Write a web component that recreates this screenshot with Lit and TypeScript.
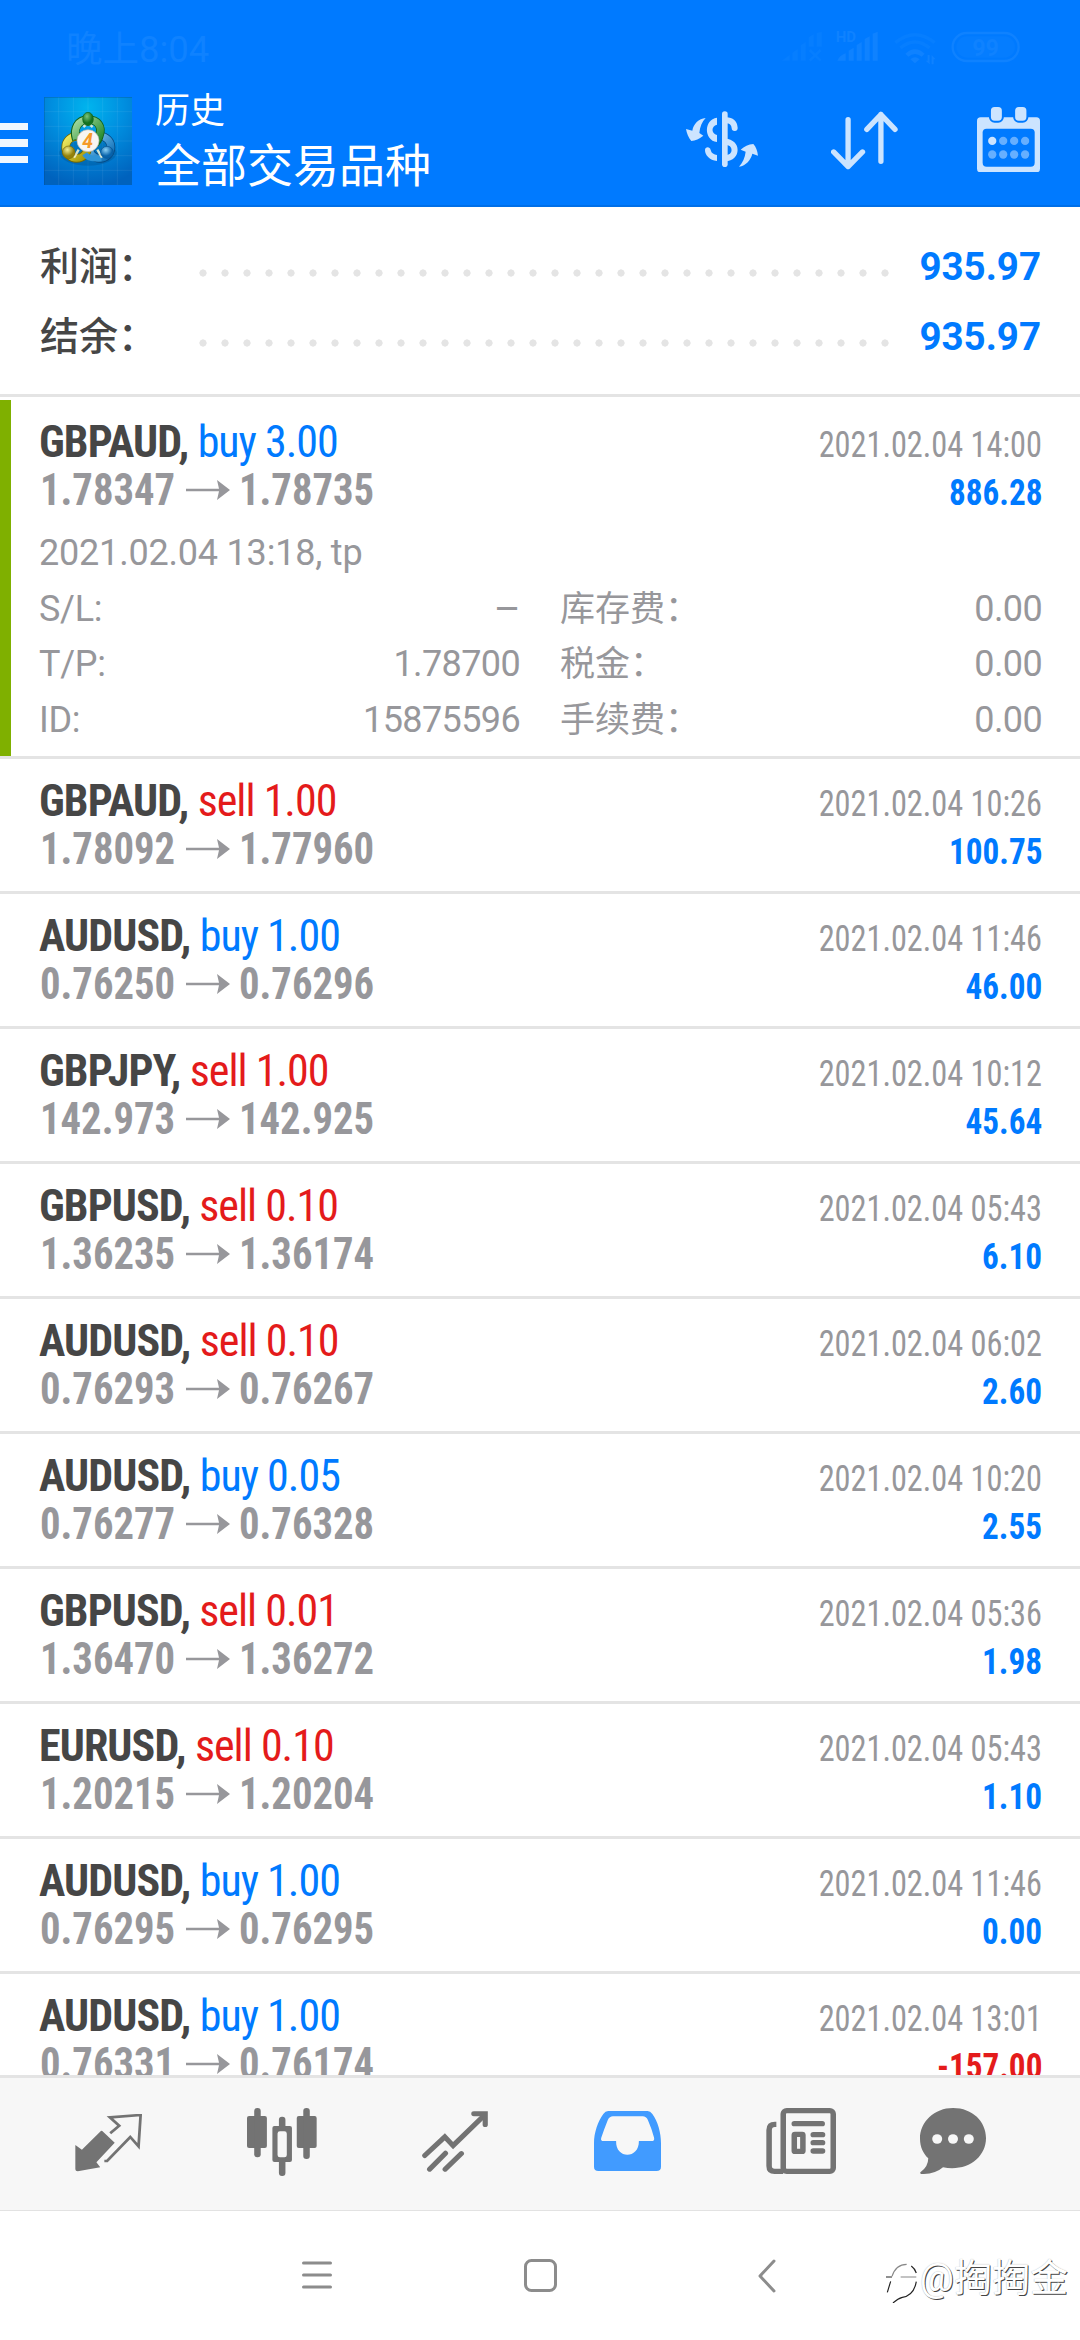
import { LitElement, html, css, svg } from "lit";
import { customElement, property } from "lit/decorators.js";
import { classMap } from "lit/directives/class-map.js";

interface Deal {
  symbol: string;
  side: "buy" | "sell";
  volume: string;
  open: string;
  close: string;
  time: string;
  profit: string;
}

const deals: Deal[] = [
  { symbol: "GBPAUD", side: "buy", volume: "3.00", open: "1.78347", close: "1.78735", time: "2021.02.04 14:00", profit: "886.28" },
  { symbol: "GBPAUD", side: "sell", volume: "1.00", open: "1.78092", close: "1.77960", time: "2021.02.04 10:26", profit: "100.75" },
  { symbol: "AUDUSD", side: "buy", volume: "1.00", open: "0.76250", close: "0.76296", time: "2021.02.04 11:46", profit: "46.00" },
  { symbol: "GBPJPY", side: "sell", volume: "1.00", open: "142.973", close: "142.925", time: "2021.02.04 10:12", profit: "45.64" },
  { symbol: "GBPUSD", side: "sell", volume: "0.10", open: "1.36235", close: "1.36174", time: "2021.02.04 05:43", profit: "6.10" },
  { symbol: "AUDUSD", side: "sell", volume: "0.10", open: "0.76293", close: "0.76267", time: "2021.02.04 06:02", profit: "2.60" },
  { symbol: "AUDUSD", side: "buy", volume: "0.05", open: "0.76277", close: "0.76328", time: "2021.02.04 10:20", profit: "2.55" },
  { symbol: "GBPUSD", side: "sell", volume: "0.01", open: "1.36470", close: "1.36272", time: "2021.02.04 05:36", profit: "1.98" },
  { symbol: "EURUSD", side: "sell", volume: "0.10", open: "1.20215", close: "1.20204", time: "2021.02.04 05:43", profit: "1.10" },
  { symbol: "AUDUSD", side: "buy", volume: "1.00", open: "0.76295", close: "0.76295", time: "2021.02.04 11:46", profit: "0.00" },
  { symbol: "AUDUSD", side: "buy", volume: "1.00", open: "0.76331", close: "0.76174", time: "2021.02.04 13:01", profit: "-157.00" },
];

const details = [
  ["S/L:", "–", "库存费：", "0.00"],
  ["T/P:", "1.78700", "税金：", "0.00"],
  ["ID:", "15875596", "手续费：", "0.00"],
];

@customElement("deal-row")
class DealRow extends LitElement {
  @property({ attribute: false }) deal!: Deal;
  @property({ type: Boolean }) expanded = false;

  static styles = css`
    :host { display: block; flex: none; border-bottom: 3px solid #e4e4e4; font-family: Roboto, "Noto Sans CJK SC", sans-serif; color: #97979b; }
    .row { padding: 18px 38px 18px 39px; }
    .row.expanded { margin-top: 3px; padding: 18px 38px 8px 28px; border-left: 11px solid #7fb000; }
    .line { display: flex; align-items: baseline; justify-content: space-between; height: 48px; line-height: 48px; font-size: 44px; white-space: pre; }
    .condensed { display: inline-block; font-stretch: 75%; }
    .symbol { font-weight: 700; color: #464646; letter-spacing: -0.900px; }
    .side { letter-spacing: -1px; }
    .buy, .plus { color: #007aff; }
    .sell, .minus { color: #e41b1b; }
    .prices { display: flex; align-items: center; font-weight: 700; }
    .price { width: 136px; transform: scaleX(0.924); transform-origin: 0 50%; margin-left: 1px; }
    .arrow { width: 44px; height: 20px; margin: 0 8px 0 10px; }
    .time { font-size: 36px; transform: scaleX(0.897); transform-origin: 100% 50%; }
    .profit { font-size: 36px; font-weight: 700; transform: scaleX(0.922); transform-origin: 100% 50%; }
    .meta { margin-top: 12px; height: 55.500px; line-height: 55.500px; font-size: 36px; letter-spacing: -0.200px; }
    .grid { display: grid; grid-template-columns: 80px 401px 200px 1fr; font-size: 36px; line-height: 55.500px; }
    .name { letter-spacing: -0.300px; }
    .num { text-align: right; letter-spacing: -0.620px; }
    .dash { font-size: 41px; }
    .cjk { font-size: 35px; padding-left: 40px; white-space: nowrap; }
  `;

  render() {
    const d = this.deal;
    const loss = d.profit.startsWith("-");
    return html`
      <div class=${classMap({ row: true, expanded: this.expanded })}>
        <div class="line">
          <span class="condensed"><span class="symbol">${d.symbol}, </span><span class=${`side ${d.side}`}>${d.side} ${d.volume}</span></span>
          <span class="condensed time">${d.time}</span>
        </div>
        <div class="line">
          <span class="prices">
            <span class="condensed price">${d.open}</span>
            <svg class="arrow" viewBox="0 0 44 20"><path d="M0 8.800H33L31 0L44 10L31 20L33 11.200H0Z" fill="#97979b" /></svg>
            <span class="condensed price">${d.close}</span>
          </span>
          <span class=${classMap({ condensed: true, profit: true, minus: loss, plus: !loss })}>${d.profit}</span>
        </div>
        ${this.expanded
          ? html`
              <div class="meta">2021.02.04 13:18, tp</div>
              <div class="grid">
                ${details.map(([a, b, c, e]) => html`<span class="name">${a}</span><span class=${classMap({ num: true, dash: b === "–" })}>${b}</span><span class="cjk">${c}</span><span class="num">${e}</span>`)}
              </div>
            `
          : null}
      </div>
    `;
  }
}

const logo = html`
  <svg class="logo" viewBox="0 0 264 264">
    <defs>
      <radialGradient id="sky" cx="50%" cy="12%" r="90%">
        <stop offset="0" stop-color="#00b4ee" /><stop offset="0.45" stop-color="#008fe0" /><stop offset="1" stop-color="#0062bd" />
      </radialGradient>
      <linearGradient id="green" x1="0" y1="0" x2="1" y2="1"><stop offset="0" stop-color="#a5dba0" /><stop offset="1" stop-color="#1c8425" /></linearGradient>
      <linearGradient id="yellow" x1="0" y1="0" x2="1" y2="1"><stop offset="0" stop-color="#eeec66" /><stop offset="1" stop-color="#a49300" /></linearGradient>
      <linearGradient id="blue" x1="0" y1="0" x2="1" y2="1"><stop offset="0" stop-color="#83c9f2" /><stop offset="1" stop-color="#0569b4" /></linearGradient>
      <radialGradient id="gball" cx="40%" cy="30%"><stop offset="0" stop-color="#7cc47d" /><stop offset="1" stop-color="#137220" /></radialGradient>
      <radialGradient id="yball" cx="40%" cy="30%"><stop offset="0" stop-color="#f2ef94" /><stop offset="1" stop-color="#93810a" /></radialGradient>
      <radialGradient id="bball" cx="40%" cy="30%"><stop offset="0" stop-color="#8bd0f5" /><stop offset="1" stop-color="#0863ab" /></radialGradient>
    </defs>
    <rect width="264" height="264" fill="url(#sky)" />
    <path d="M44 0V264M88 0V264M132 0V264M176 0V264M220 0V264M0 44H264M0 88H264M0 132H264M0 176H264M0 220H264" stroke="#fff" stroke-opacity="0.1" stroke-width="2" />
    <path d="M1 264V1H264" fill="none" stroke="#05427e" stroke-opacity="0.5" stroke-width="2" />
    <ellipse cx="132" cy="168" rx="86" ry="38" fill="#00467f" opacity="0.3" />
    <circle cx="168" cy="151" r="33" fill="none" stroke="#064a83" stroke-width="26" />
    <circle cx="168" cy="151" r="33" fill="none" stroke="url(#blue)" stroke-width="21" />
    <circle cx="98" cy="151" r="33" fill="none" stroke="#756800" stroke-width="26" />
    <circle cx="98" cy="151" r="33" fill="none" stroke="url(#yellow)" stroke-width="21" />
    <path d="M97 128C86 96 102 68 132 68C162 68 176 90 166 116C164 126 158 134 152 140" fill="none" stroke="#12631b" stroke-width="26" />
    <path d="M97 126C88 96 102 68 132 68C162 68 176 90 166 116C164 126 158 132 153 138" fill="none" stroke="url(#green)" stroke-width="21" />
    <path d="M122 170C132 186 150 186 172 184" fill="none" stroke="#2f94d6" stroke-width="17" />
    <path d="M104 158L90 182M160 158L174 182M118 90L132 78L146 90" stroke="#f4f6d5" stroke-width="7" opacity="0.85" fill="none" />
    <ellipse cx="132" cy="66" rx="16" ry="20" fill="url(#gball)" stroke="#126319" stroke-width="2" />
    <ellipse cx="74" cy="166" rx="19" ry="19" fill="url(#yball)" stroke="#786b06" stroke-width="2" />
    <ellipse cx="189" cy="166" rx="19" ry="18" fill="url(#bball)" stroke="#07518f" stroke-width="2" />
    <circle cx="132" cy="131" r="33" fill="#f7f5f3" stroke="#b7b4ab" stroke-width="2" />
    <text x="131" y="152" text-anchor="middle" font-family="Roboto, sans-serif" font-size="58" font-weight="700" font-style="italic" fill="#f59a28">4</text>
  </svg>
`;

const currencyIcon = html`
  <svg class="currency" viewBox="138 333 216 168" fill="#cce4ff">
    <path d="M254.500 342V493" stroke="#cce4ff" stroke-width="17" stroke-linecap="round" />
    <path d="M256 361C275 360 283 370 284 384M256 425C293 427 293 473 256 475" fill="none" stroke="#cce4ff" stroke-width="18" stroke-linecap="round" />
    <path d="M231 353C191 358 191 421 231 426V405C213 400 213 379 231 374Z" />
    <path d="M195 450C195 440 210 439 212 450C214 460 222 464 231 465V483C208 481 195 465 195 450Z" />
    <path d="M197 354C176 356 160 372 157 392L138 387C140 400 146 414 154 423Q172 421 190 407L178 399C180 380 186 365 197 354Z" />
    <path d="M297 500C318 498 333 478 337 461L354 467C352 452 348 440 340 432Q318 434 302 449L317 455C315 472 308 488 297 500Z" />
  </svg>
`;

const sortIcon = html`
  <svg class="sort" viewBox="574 333 202 177" fill="none" stroke="#cce4ff" stroke-width="16" stroke-linecap="round" stroke-linejoin="round">
    <path d="M625.500 359V500M582 456L625.500 500L669 456M724.500 484V343M682 388L724.500 343L767 388" />
  </svg>
`;

const calendarIcon = html`
  <svg class="calendar" viewBox="1010 320 190 197">
    <rect x="1010" y="351" width="190" height="166" rx="11" fill="#cce4ff" />
    <rect x="1027" y="385" width="157" height="115" rx="12" fill="#007aff" />
    <rect x="1049" y="317" width="39" height="47" rx="14" fill="#cce4ff" stroke="#007aff" stroke-width="6" />
    <rect x="1122" y="317" width="40" height="47" rx="14" fill="#cce4ff" stroke="#007aff" stroke-width="6" />
    ${[0, 1, 2, 3].flatMap((c) => [0, 1].map((r) => svg`<circle cx=${1056 + c * 33} cy=${422 + r * 41} r="12.500" fill=${c + r === 0 ? "#cce4ff" : "#66afff"} />`))}
  </svg>
`;

const statusIcons = html`
  <svg class="status-icons" viewBox="424 90 720 104" fill="#0f82ff">
    <g fill="#067eff">
      <path d="M426 182L450 165V182ZM458 158L474 147V182H458ZM483 136L498 126V182H483ZM507 112L522 103V140H507ZM531 99L546 95V140H531Z" />
      <path d="M510 150L543 182M543 150L510 182" stroke="#067eff" stroke-width="8" />
    </g>
    <path d="M593 182Q600 166 618 160V182ZM627 152L642 143V182H627ZM651 135L666 126V182H651ZM675 117L690 109V182H675ZM699 101L714 95V182H699Z" />
    <text x="588" y="126" font-family="Roboto, sans-serif" font-weight="700" font-size="45">HD</text>
    <path d="M767 128Q826 80 885 128M782 144Q826 108 870 144" fill="none" stroke="#067eff" stroke-width="10" />
    <path d="M797 161Q826 134 855 161L846 170Q826 154 806 170ZM812 178Q826 166 840 178L826 190Z" />
    <path d="M858 182H864V165H870V193ZM888 178H882V193H876V165Z" />
    <rect x="939" y="99" width="198" height="84" rx="42" fill="none" stroke="#0f82ff" stroke-width="7" />
    <rect x="950" y="109" width="176" height="64" rx="32" fill="#057dff" />
    <text x="1038" y="167" text-anchor="middle" font-family="Roboto, sans-serif" font-weight="700" font-size="70">99</text>
  </svg>
`;

const g = "#737373";
const tabs = [
  html`<svg class="t1" viewBox="218 461 194 174" preserveAspectRatio="none">
    <path d="M297 512L333 547L280 606L291 621L226 633Q219 633 219 627V554L238 568L293 512Q295 510 297 512Z" fill=${g} />
    <path d="M320 519L346 496L319 471L408 464L402 558L378 530L311 602H303" fill="none" stroke=${g} stroke-width="8" stroke-linejoin="miter" />
  </svg>`,
  html`<svg class="t2" viewBox="714 444 204 204" preserveAspectRatio="none" fill=${g}>
    <rect x="714" y="468" width="58" height="96" rx="6" /><rect x="735" y="444" width="19" height="148" rx="9" />
    <rect x="859" y="468" width="58" height="96" rx="6" /><rect x="878" y="444" width="19" height="153" rx="9" />
    <rect x="788" y="498" width="57" height="108" rx="6" /><rect x="807" y="470" width="19" height="178" rx="9" />
    <rect x="803" y="514" width="27" height="78" rx="7" fill="#f7f7f7" />
  </svg>`,
  html`<svg class="t3" viewBox="1223 452 191 182" preserveAspectRatio="none" fill="none" stroke=${g} stroke-width="15" stroke-linecap="round">
    <path d="M1231 586L1289 530L1313 556L1402 466M1245 627L1291 579M1290 627L1337 580" /><path d="M1373 460H1406V493" stroke-linejoin="miter" />
  </svg>`,
  html`<svg class="t4" viewBox="157 453 194 180" preserveAspectRatio="none">
    <path d="M198 453H312Q320 453 326 462C342 485 351 518 351 550V620Q351 633 338 633H170Q157 633 157 620V550C157 518 168 485 184 462Q190 453 198 453Z" fill="#419bff" />
    <path d="M212 469H298Q308 469 313 480Q324 506 331 533Q333 543 324 543H287C288 598 219 598 221 543H185Q175 543 178 533Q187 506 197 480Q202 469 212 469Z" fill="#f7f7f7" />
  </svg>`,
  html`<svg class="t5" viewBox="656 444 203 198" preserveAspectRatio="none" fill="none" stroke=${g} stroke-width="16">
    <rect x="706" y="452" width="145" height="182" rx="10" /><path d="M686 493H682Q665 493 665 510V618Q665 634 681 634H706" />
    <path d="M738 491H819M793 524H820M793 548H820M793 573H820" stroke-linecap="round" /><rect x="738" y="523" width="25" height="51" rx="2" />
  </svg>`,
  html`<svg class="t6" viewBox="1103 444 192 198" preserveAspectRatio="none">
    <path d="M1199 444C1256 444 1295 485 1295 534C1295 593 1240 636 1170 622Q1147 643 1107 642Q1101 641 1105 636Q1127 620 1127 595C1112 580 1103 560 1103 536C1103 485 1145 444 1199 444Z" fill=${g} />
    <circle cx="1153" cy="537" r="14.500" fill="#f7f7f7" /><circle cx="1199" cy="537" r="14.500" fill="#f7f7f7" /><circle cx="1245" cy="537" r="14.500" fill="#f7f7f7" />
  </svg>`,
];

@customElement("app-root")
class AppRoot extends LitElement {
  static styles = css`
    :host { display: flex; flex-direction: column; width: 1080px; height: 2340px; overflow: hidden; background: #fff; font-family: Roboto, "Noto Sans CJK SC", sans-serif; }
    svg { display: block; flex: none; }
    .head { flex: none; box-sizing: border-box; height: 207px; background: #007aff; border-bottom: 2px solid #006fe8; }
    .status { display: flex; justify-content: space-between; height: 91px; box-sizing: border-box; padding: 26px 59px 0 66px; color: #0f82ff; font-size: 36.500px; line-height: 48px; }
    .status-icons { width: 240px; height: 34.670px; margin-top: 4px; overflow: visible; }
    .bar { display: flex; align-items: flex-start; height: 114px; color: #fff; }
    .menu { display: flex; flex-direction: column; gap: 9px; width: 28px; margin-top: 32px; }
    .menu-line { height: 7.300px; background: #f0f7ff; }
    .logo { width: 88px; height: 88px; margin: 6px 0 0 16px; }
    .titles { flex: 1; margin-left: 23px; white-space: nowrap; }
    .title { height: 43px; line-height: 43px; font-size: 35px; margin-top: -1px; }
    .subtitle { height: 60px; line-height: 60px; font-size: 46px; margin-top: 3px; }
    .currency { width: 72px; height: 56px; margin: 20px 73px 0 0; }
    .sort { width: 67px; height: 59px; margin: 20px 79px 0 0; }
    .calendar { width: 63px; height: 65.500px; margin: 15.500px 40px 0 0; }
    .totals { flex: none; box-sizing: border-box; height: 190px; padding: 25px 39px 0 40px; border-bottom: 3px solid #e4e4e4; }
    .total { display: flex; align-items: center; height: 70px; line-height: 70px; font-size: 38.500px; font-weight: 700; }
    .label { width: 152px; color: #464646; font-weight: 500; font-size: 39px; white-space: nowrap; }
    .dots { width: 704px; height: 8px; margin-top: 12px; background: radial-gradient(circle, #e4e4e4 3.300px, transparent 3.900px) 0 0 / 22px 8px repeat-x; }
    .amount { flex: 1; text-align: right; color: #007aff; }
    .list { flex: 1; min-height: 0; overflow: hidden; display: flex; flex-direction: column; }
    .tabs { flex: none; box-sizing: border-box; height: 136px; border-top: 3px solid #e4e4e4; border-bottom: 1px solid #e2e2e2; background: #f7f7f7; display: grid; grid-template-columns: 173px 173px 173px 173px 174px 130px; justify-items: center; align-items: start; padding-left: 22px; }
    .t1 { width: 67px; height: 58px; margin-top: 36px; }
    .t2 { width: 70px; height: 68px; margin-top: 30px; }
    .t3 { width: 66px; height: 60.500px; margin-top: 33px; }
    .t4 { width: 67px; height: 60px; margin-top: 33px; }
    .t5 { width: 70px; height: 66px; margin-top: 30px; }
    .t6 { width: 66px; height: 66px; margin-top: 30px; }
    .nav { flex: none; height: 129px; display: flex; align-items: flex-start; }
    .nav-menu { width: 30px; height: 28px; margin: 50px 0 0 302px; }
    .nav-home { width: 33px; height: 33px; margin: 48px 0 0 191.500px; }
    .nav-back { width: 18px; height: 34px; margin: 47.500px 0 0 201px; }
    .credit { display: flex; align-items: flex-start; margin: 42px 0 0 108px; white-space: nowrap; }
    .swirl { width: 33.300px; height: 40.700px; margin-top: 9.700px; }
    .credit-text { margin-left: 3px; font-size: 38px; line-height: 50px; color: #fff; text-shadow: 1px 1px 0.500px #444, 0 0 1px #aaa; }
  `;

  private total(label: string, amount: string) {
    return html`<div class="total"><span class="label">${label}</span><span class="dots"></span><span class="amount">${amount}</span></div>`;
  }

  render() {
    return html`
      <header class="head">
        <div class="status"><span>晚上8:04</span>${statusIcons}</div>
        <div class="bar">
          <div class="menu"><span class="menu-line"></span><span class="menu-line"></span><span class="menu-line"></span></div>
          ${logo}
          <div class="titles"><div class="title">历史</div><div class="subtitle">全部交易品种</div></div>
          ${currencyIcon}${sortIcon}${calendarIcon}
        </div>
      </header>
      <section class="totals">${this.total("利润：", "935.97")}${this.total("结余：", "935.97")}</section>
      <main class="list">${deals.map((d, i) => html`<deal-row .deal=${d} ?expanded=${i === 0}></deal-row>`)}</main>
      <nav class="tabs">${tabs}</nav>
      <footer class="nav">
        <svg class="nav-menu" viewBox="0 0 30 28"><path d="M1.500 2H28.500M1.500 14H28.500M1.500 26H28.500" stroke="#8c8c8c" stroke-width="3" stroke-linecap="round" /></svg>
        <svg class="nav-home" viewBox="0 0 33 33"><rect x="1.500" y="1.500" width="30" height="30" rx="6" fill="none" stroke="#8c8c8c" stroke-width="3" /></svg>
        <svg class="nav-back" viewBox="0 0 18 34"><path d="M16 2L2 17L16 32" fill="none" stroke="#8c8c8c" stroke-width="3" stroke-linecap="round" stroke-linejoin="round" /></svg>
        <div class="credit">
          <svg class="swirl" viewBox="40 68 100 122" fill="none" stroke="#222" stroke-width="3.500">
            <path d="M60 123L50 156M46 110H64M122 77Q132 84 137 98M137 124C132 152 116 168 95 171Q82 174 67 188" />
            <path d="M64 108Q76 72 108 72M90 110H137" stroke="#888" />
          </svg>
          <span class="credit-text">@掏掏金</span>
        </div>
      </footer>
    `;
  }
}
